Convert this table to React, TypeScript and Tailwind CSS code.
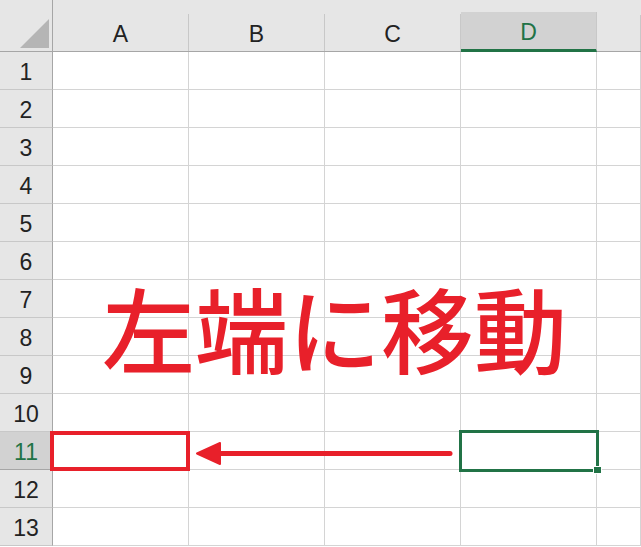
import React from 'react';

const cols = ['A', 'B', 'C', 'D', ''];
const rows = Array.from({ length: 13 }, (_, i) => i + 1);

export default function App() {
  return (
    <div
      className="relative w-[641px] h-[547px] overflow-hidden bg-white"
      style={{ fontFamily: '"Liberation Sans", "Noto Sans", sans-serif' }}
    >
      <div className="grid grid-cols-[53px_136px_136px_136px_136px_1fr] grid-rows-[52px_repeat(13,38px)]">
        {/* corner */}
        <div className="bg-[#e6e6e6] border-r border-b border-[#a6a6a6] flex items-end justify-end pr-[3px] pb-[3px]">
          <svg width="29" height="29" viewBox="0 0 29 29">
            <polygon points="29,0 29,29 0,29" fill="#b5b5b5" />
          </svg>
        </div>
        {cols.map((c, i) => (
          <div key={'h' + i} className="bg-[#e6e6e6] border-b border-[#a6a6a6] flex flex-col">
            <div className="h-[15px]" />
            <div
              className={
                'flex-1 flex items-center justify-center pt-[3px] text-[23px] border-r border-[#c8c8c8] ' +
                (c === 'D'
                  ? 'bg-[#d2d2d2] text-[#217346] border-b-[3px] border-b-[#217346] -mb-px'
                  : 'text-[#222]')
              }
            >
              {c}
            </div>
          </div>
        ))}
        {rows.map((r) => (
          <React.Fragment key={r}>
            <div
              className={
                'border-r border-b flex items-center justify-center pt-[3px] text-[23px] ' +
                (r === 11
                  ? 'bg-[#d2d2d2] text-[#217346] border-[#a6a6a6]'
                  : 'bg-[#e6e6e6] text-[#222] border-r-[#a6a6a6] border-b-[#c8c8c8]')
              }
            >
              {r}
            </div>
            {cols.map((_, i) => (
              <div key={i} className="border-r border-b border-[#d4d4d4]" />
            ))}
          </React.Fragment>
        ))}
      </div>

      {/* title */}
      <div
        className="absolute left-[102px] top-[280px] text-[93px] font-medium leading-none text-[#e8202a]"
        style={{ fontFamily: '"Noto Sans CJK JP", sans-serif' }}
      >
        左端に移動
      </div>

      {/* destination cell (red) */}
      <div className="absolute left-[50px] top-[431px] w-[140px] h-[40px] border-[4px] border-[#e8202a]" />

      {/* arrow */}
      <svg className="absolute left-[190px] top-[440px]" width="270" height="28" viewBox="0 0 270 28">
        <line x1="28" y1="13.5" x2="260" y2="13.5" stroke="#e8202a" strokeWidth="5" strokeLinecap="round" />
        <polygon points="7,13.5 30,3 30,24" fill="#e8202a" stroke="#e8202a" strokeWidth="2" strokeLinejoin="round" />
      </svg>

      {/* active cell (green) */}
      <div className="absolute left-[459px] top-[430px] w-[140px] h-[42px] border-[3px] border-[#217346]" />
      <div className="absolute left-[593px] top-[466px] w-[9px] h-[8px] bg-[#217346] border border-white" />
    </div>
  );
}
